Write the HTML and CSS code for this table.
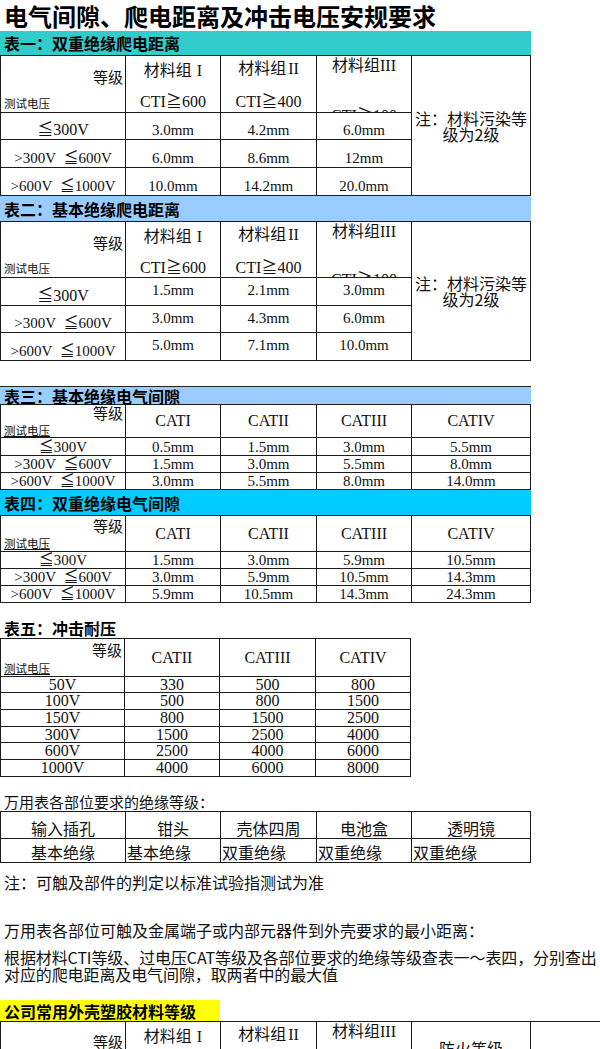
FILE: index.html
```html
<!DOCTYPE html>
<html lang="zh-CN">
<head>
<meta charset="utf-8">
<title>电气间隙、爬电距离及冲击电压安规要求</title>
<link rel="stylesheet" href="styles.css">
</head>
<body>
<div class="page">
  <h1 class="title">电气间隙、爬电距离及冲击电压安规要求</h1>

  <div class="bar bar1">表一：双重绝缘爬电距离</div>
  <div class="grid g5 t1">
    <div class="cell corner ck"><span class="dj">等级</span><span class="cs">测试电压</span></div>
    <div class="cell mat m1"><div class="ml">材料组<span class="rn r1">I</span></div><div class="ct">CTI≧600</div></div>
    <div class="cell mat m2"><div class="ml">材料组<span class="rn r2">II</span></div><div class="ct">CTI≧400</div></div>
    <div class="cell mat m3"><div class="ml">材料组<span class="rn">III</span></div><div class="ct">CTI≧100</div></div>
    <div class="cell note">注：材料污染等级为2级</div>
    <div class="cell bt sf big">≦300V</div>
    <div class="cell bt sf">3.0mm</div>
    <div class="cell bt sf">4.2mm</div>
    <div class="cell bt sf">6.0mm</div>
    <div class="cell bt sf">&gt;300V&nbsp; ≦600V</div>
    <div class="cell bt sf">6.0mm</div>
    <div class="cell bt sf">8.6mm</div>
    <div class="cell bt sf">12mm</div>
    <div class="cell bt sf">&gt;600V&nbsp; ≦1000V</div>
    <div class="cell bt sf">10.0mm</div>
    <div class="cell bt sf">14.2mm</div>
    <div class="cell bt sf">20.0mm</div>
  </div>

  <div class="bar bar2">表二：基本绝缘爬电距离</div>
  <div class="grid g5 t2">
    <div class="cell corner ck"><span class="dj">等级</span><span class="cs">测试电压</span></div>
    <div class="cell mat m1"><div class="ml">材料组<span class="rn r1">I</span></div><div class="ct">CTI≧600</div></div>
    <div class="cell mat m2"><div class="ml">材料组<span class="rn r2">II</span></div><div class="ct">CTI≧400</div></div>
    <div class="cell mat m3 m3b"><div class="ml">材料组<span class="rn">III</span></div><div class="ct">CTI≧100</div></div>
    <div class="cell note">注：材料污染等级为2级</div>
    <div class="cell bt sf big">≦300V</div>
    <div class="cell sf up">1.5mm</div>
    <div class="cell sf up">2.1mm</div>
    <div class="cell sf up">3.0mm</div>
    <div class="cell bt sf">&gt;300V&nbsp; ≦600V</div>
    <div class="cell sf up">3.0mm</div>
    <div class="cell sf up">4.3mm</div>
    <div class="cell sf up">6.0mm</div>
    <div class="cell bt sf">&gt;600V&nbsp; ≦1000V</div>
    <div class="cell sf up">5.0mm</div>
    <div class="cell sf up">7.1mm</div>
    <div class="cell sf up">10.0mm</div>
  </div>

  <div class="bar bar3">表三：基本绝缘电气间隙</div>
  <div class="grid g5 t3">
    <div class="cell corner cs3"><span class="dj">等级</span><span class="cs ul">测试电压</span></div>
    <div class="cell sf hd">CATI</div>
    <div class="cell sf hd">CATII</div>
    <div class="cell sf hd">CATIII</div>
    <div class="cell sf hd">CATIV</div>
    <div class="cell sf">≦300V</div>
    <div class="cell sf">0.5mm</div>
    <div class="cell sf">1.5mm</div>
    <div class="cell sf">3.0mm</div>
    <div class="cell sf">5.5mm</div>
    <div class="cell sf">&gt;300V&nbsp; ≦600V</div>
    <div class="cell sf">1.5mm</div>
    <div class="cell sf">3.0mm</div>
    <div class="cell sf">5.5mm</div>
    <div class="cell sf">8.0mm</div>
    <div class="cell sf">&gt;600V&nbsp; ≦1000V</div>
    <div class="cell sf">3.0mm</div>
    <div class="cell sf">5.5mm</div>
    <div class="cell sf">8.0mm</div>
    <div class="cell sf">14.0mm</div>
  </div>

  <div class="bar bar4">表四：双重绝缘电气间隙</div>
  <div class="grid g5 t4">
    <div class="cell corner cs4"><span class="dj">等级</span><span class="cs ul">测试电压</span></div>
    <div class="cell sf hd">CATI</div>
    <div class="cell sf hd">CATII</div>
    <div class="cell sf hd">CATIII</div>
    <div class="cell sf hd">CATIV</div>
    <div class="cell sf">≦300V</div>
    <div class="cell sf">1.5mm</div>
    <div class="cell sf">3.0mm</div>
    <div class="cell sf">5.9mm</div>
    <div class="cell sf">10.5mm</div>
    <div class="cell sf">&gt;300V&nbsp; ≦600V</div>
    <div class="cell sf">3.0mm</div>
    <div class="cell sf">5.9mm</div>
    <div class="cell sf">10.5mm</div>
    <div class="cell sf">14.3mm</div>
    <div class="cell sf">&gt;600V&nbsp; ≦1000V</div>
    <div class="cell sf">5.9mm</div>
    <div class="cell sf">10.5mm</div>
    <div class="cell sf">14.3mm</div>
    <div class="cell sf">24.3mm</div>
  </div>

  <div class="sec">表五：冲击耐压</div>
  <div class="grid g4 t5">
    <div class="cell corner cs5"><span class="dj">等级</span><span class="cs ul">测试电压</span></div>
    <div class="cell sf hd">CATII</div>
    <div class="cell sf hd">CATIII</div>
    <div class="cell sf hd">CATIV</div>
    <div class="cell sf n">50V</div><div class="cell sf n">330</div><div class="cell sf n">500</div><div class="cell sf n">800</div>
    <div class="cell sf n">100V</div><div class="cell sf n">500</div><div class="cell sf n">800</div><div class="cell sf n">1500</div>
    <div class="cell sf n">150V</div><div class="cell sf n">800</div><div class="cell sf n">1500</div><div class="cell sf n">2500</div>
    <div class="cell sf n">300V</div><div class="cell sf n">1500</div><div class="cell sf n">2500</div><div class="cell sf n">4000</div>
    <div class="cell sf n">600V</div><div class="cell sf n">2500</div><div class="cell sf n">4000</div><div class="cell sf n">6000</div>
    <div class="cell sf n">1000V</div><div class="cell sf n">4000</div><div class="cell sf n">6000</div><div class="cell sf n">8000</div>
  </div>

  <p class="txt t-a">万用表各部位要求的绝缘等级：</p>
  <div class="grid g5 t6">
    <div class="cell bt cj">输入插孔</div>
    <div class="cell bt cj">钳头</div>
    <div class="cell bt cj">壳体四周</div>
    <div class="cell bt cj">电池盒</div>
    <div class="cell bt cj">透明镜</div>
    <div class="cell bt cj">基本绝缘</div>
    <div class="cell bl cj">基本绝缘</div>
    <div class="cell bl cj">双重绝缘</div>
    <div class="cell bl cj">双重绝缘</div>
    <div class="cell bl cj">双重绝缘</div>
  </div>

  <p class="txt t-b">注：可触及部件的判定以标准试验指测试为准</p>
  <p class="txt t-c">万用表各部位可触及金属端子或内部元器件到外壳要求的最小距离：</p>
  <p class="txt t-d">根据材料CTI等级、过电压CAT等级及各部位要求的绝缘等级查表一～表四，分别查出<br>对应的爬电距离及电气间隙，取两者中的最大值</p>

  <div class="ybar">公司常用外壳塑胶材料等级</div>
  <div class="grid g6 t7">
    <div class="cell corner c7"><span class="dj">等级</span><span class="cs">测试电压</span></div>
    <div class="cell mat m1"><div class="ml">材料组<span class="rn r1">I</span></div><div class="ct">CTI≧600</div></div>
    <div class="cell mat m2"><div class="ml">材料组<span class="rn r2">II</span></div><div class="ct">CTI≧400</div></div>
    <div class="cell mat m3"><div class="ml">材料组<span class="rn">III</span></div><div class="ct">CTI≧100</div></div>
    <div class="cell fire cj">防火等级</div>
    <div class="cell"></div>
  </div>
</div>
</body>
</html>
```

FILE: styles.css
```css
html, body {
  margin: 0;
  padding: 0;
  background: #fff;
}
body {
  color: #111;
  font-family: "Noto Sans CJK SC", "Noto Sans", sans-serif;
  overflow: hidden;
}
.page {
  width: 600px;
}
.title {
  margin: 0;
  height: 31px;
  padding-left: 4px;
  font-size: 24px;
  font-weight: 700;
  line-height: 31px;
  white-space: nowrap;
  color: #000;
}

/* section bars */
.bar {
  width: 531px;
  box-sizing: border-box;
  padding-left: 4px;
  display: flex;
  align-items: center;
  font-size: 16px;
  font-weight: 700;
  white-space: nowrap;
  color: #000;
}
.bar1 { height: 24px; background: #33cccc; }
.bar2 { height: 25px; background: #99ccff; }
.bar3 { height: 18px; background: #99ccff; border-top: 1px solid #222; margin-top: 25px; }
.bar4 { height: 25px; background: #00ccff; }

.sec {
  margin-top: 15px;
  height: 20px;
  padding-left: 4px;
  font-size: 16px;
  font-weight: 700;
  line-height: 20px;
  color: #000;
}
.ybar {
  margin-top: 17px;
  width: 220px;
  height: 21px;
  box-sizing: border-box;
  padding-left: 4px;
  background: #ffff00;
  display: flex;
  align-items: center;
  font-size: 16px;
  font-weight: 700;
  white-space: nowrap;
  color: #000;
}

/* grids (spreadsheet tables) */
.grid {
  display: grid;
  gap: 1px;
  padding: 1px;
  background: #1c1c1c;
  width: max-content;
}
.g5 { grid-template-columns: 124px 94px 95px 94px 118px; }
.g4 { grid-template-columns: 123px 94px 95px 94px; }
.g6 { grid-template-columns: 124px 94px 95px 94px 118px 90px; }

.t1 { grid-template-rows: 56px 26px 27px 27px; }
.t2 { grid-template-rows: 55px 27px 26px 27px; }
.t3 { grid-template-rows: 32px 17px 16px 16px; }
.t4 { grid-template-rows: 35px 16px 16px 16px; }
.t5 { grid-template-rows: 37px 15px 16px 16px 15px 16px 16px; }
.t6 { grid-template-rows: 26px 23px; }
.t7 { grid-template-rows: 60px; }

.cell {
  background: #fff;
  display: flex;
  align-items: center;
  justify-content: center;
  min-width: 0;
  min-height: 0;
  white-space: nowrap;
}
.bt { align-items: flex-end; padding-bottom: 1px; }
.bl { align-items: flex-end; justify-content: flex-start; padding-bottom: 1px; padding-left: 1px; }
.up { align-items: center; padding-bottom: 3px; }

.sf {
  font-family: "Liberation Serif", "Noto Sans CJK SC", serif;
  font-size: 15px;
  line-height: 16px;
}
.big { font-size: 16px; }
.hd { font-size: 16px; }
.n { font-size: 16px; line-height: 16px; }
.cj {
  font-size: 16px;
  line-height: 18px;
}

/* corner header cells: 等级 / 测试电压 */
.corner {
  flex-direction: column;
  align-items: stretch;
  justify-content: flex-start;
  overflow: hidden;
}
.corner .dj {
  text-align: right;
  font-size: 15px;
  line-height: 18px;
  padding-right: 2px;
}
.corner .cs {
  margin-top: auto;
  padding-left: 3px;
  font-size: 11.5px;
  line-height: 13px;
}
.ul { text-decoration: underline; }
.corner .cs.ul { align-self: flex-start; }
.ck .dj { margin-top: 12px; }
.ck .cs { margin-bottom: 2px; }
.cs3 .dj { margin-top: -1px; }
.cs3 .cs { margin-bottom: 0; }
.cs4 .dj { margin-top: 1px; }
.cs4 .cs { margin-bottom: 1px; }
.cs5 .dj { margin-top: 2px; }
.cs5 .cs { margin-bottom: 1px; }
.c7 .dj { margin-top: 11px; }

/* 材料组 header cells */
.mat {
  flex-direction: column;
  justify-content: flex-start;
  overflow: hidden;
}
.mat .ml {
  font-size: 16px;
  line-height: 20px;
}
.mat .ct {
  font-family: "Liberation Serif", "Noto Sans CJK SC", serif;
  font-size: 16px;
  line-height: 20px;
}
.rn {
  font-family: "Liberation Serif", serif;
}
.r1 { margin-left: 5px; }
.r2 { margin-left: 2px; }
.m1 .ml { margin-top: 3px; }
.m1 .ct { margin-top: 11px; }
.m2 .ml { margin-top: 1px; }
.m2 .ct { margin-top: 13px; }
.m3 .ml { margin-top: -2px; }
.m3 .ct { margin-top: 30px; }
.m3b .ct { margin-top: 28px; }

.note {
  grid-column: 5;
  grid-row: 1 / span 4;
  white-space: normal;
  text-align: center;
  font-size: 16px;
  line-height: 16px;
  padding: 0 2px;
}
.fire {
  align-items: flex-start;
  padding-top: 17px;
}

/* free text */
.txt {
  margin: 0;
  padding-left: 4px;
  font-size: 16px;
  white-space: nowrap;
  color: #111;
}
.t-a { margin-top: 16px; font-size: 15px; line-height: 18px; }
.t-b { margin-top: 9px; line-height: 20px; }
.t-c { margin-top: 28px; line-height: 20px; }
.t-d { margin-top: 9px; line-height: 17px; letter-spacing: -0.1px; }
```
